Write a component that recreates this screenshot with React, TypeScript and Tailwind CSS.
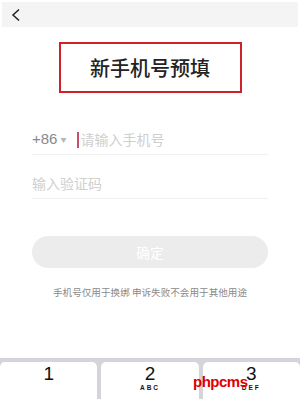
import { JSX } from 'react'

const keys = [
  { num: '1', sub: '' },
  { num: '2', sub: 'ABC' },
  { num: '3', sub: 'DEF' }
]

export default function App(): JSX.Element {
  return (
    <div
      className="relative w-[300px] h-[399px] overflow-hidden bg-white flex flex-col"
      style={{ fontFamily: '"Noto Sans CJK SC", "Liberation Sans", sans-serif' }}
    >
      {/* top bar */}
      <div className="mx-[2px] mt-[2px] h-[25px] bg-[#f4f4f4] flex items-center pl-[9px]">
        <svg width="10" height="14" viewBox="0 0 10 14" fill="none">
          <path d="M8 1.5 2 7 8 12.5" stroke="#222" strokeWidth="1.5" />
        </svg>
      </div>

      {/* title, boxed in red */}
      <div className="mt-[15px] mx-auto w-[183px] h-[51px] border-2 border-[#d0202a] flex items-center justify-center">
        <span className="text-[20px] font-medium text-[#222] leading-none">新手机号预填</span>
      </div>

      {/* form */}
      <div className="px-[32px] mt-[32px] flex flex-col">
        <div className="h-[30px] flex items-center border-b border-[#f0f0f0]">
          <span className="text-[15px] text-[#8a8a8a]" style={{ fontFamily: '"Liberation Sans", sans-serif' }}>
            +86
          </span>
          <span className="ml-[3px] text-[6px] text-[#b5b5b5]">▼</span>
          <span className="ml-[11px] w-[2px] h-[16px] bg-[#c4506a]" />
          <span className="ml-[1px] text-[14px] text-[#cfcfcf]">请输入手机号</span>
        </div>
        <div className="mt-[13px] h-[31px] flex items-center border-b border-[#f0f0f0]">
          <span className="text-[14px] text-[#cfcfcf]">输入验证码</span>
        </div>

        <button className="mt-[37px] h-[32px] rounded-full bg-[#ececec] text-white text-[14px] flex items-center justify-center">
          确定
        </button>

        <p className="mt-[17px] text-center text-[9.6px] text-[#8a8a8a] whitespace-nowrap">
          手机号仅用于换绑 申诉失败不会用于其他用途
        </p>
      </div>

      {/* number keyboard */}
      <div className="mt-auto h-[41px] bg-[#d3d5da] pt-[4px] flex gap-[4px]">
        {keys.map((k) => (
          <div
            key={k.num}
            className="flex-1 bg-white rounded-t-[5px] flex flex-col items-center pt-[1px]"
          >
            <span className="text-[19px] leading-[22px] text-[#111]" style={{ fontFamily: '"Liberation Sans", sans-serif' }}>
              {k.num}
            </span>
            <span className="text-[6.5px] font-bold tracking-[2px] leading-none text-[#111]" style={{ fontFamily: '"Liberation Sans", sans-serif' }}>
              {k.sub}
            </span>
          </div>
        ))}
      </div>

      {/* watermark */}
      <span
        className="absolute left-[193px] top-[371px] text-[15px] font-bold text-[#e00000] tracking-[-0.5px]"
        style={{ fontFamily: '"Liberation Sans", sans-serif' }}
      >
        phpcms
      </span>
    </div>
  )
}
